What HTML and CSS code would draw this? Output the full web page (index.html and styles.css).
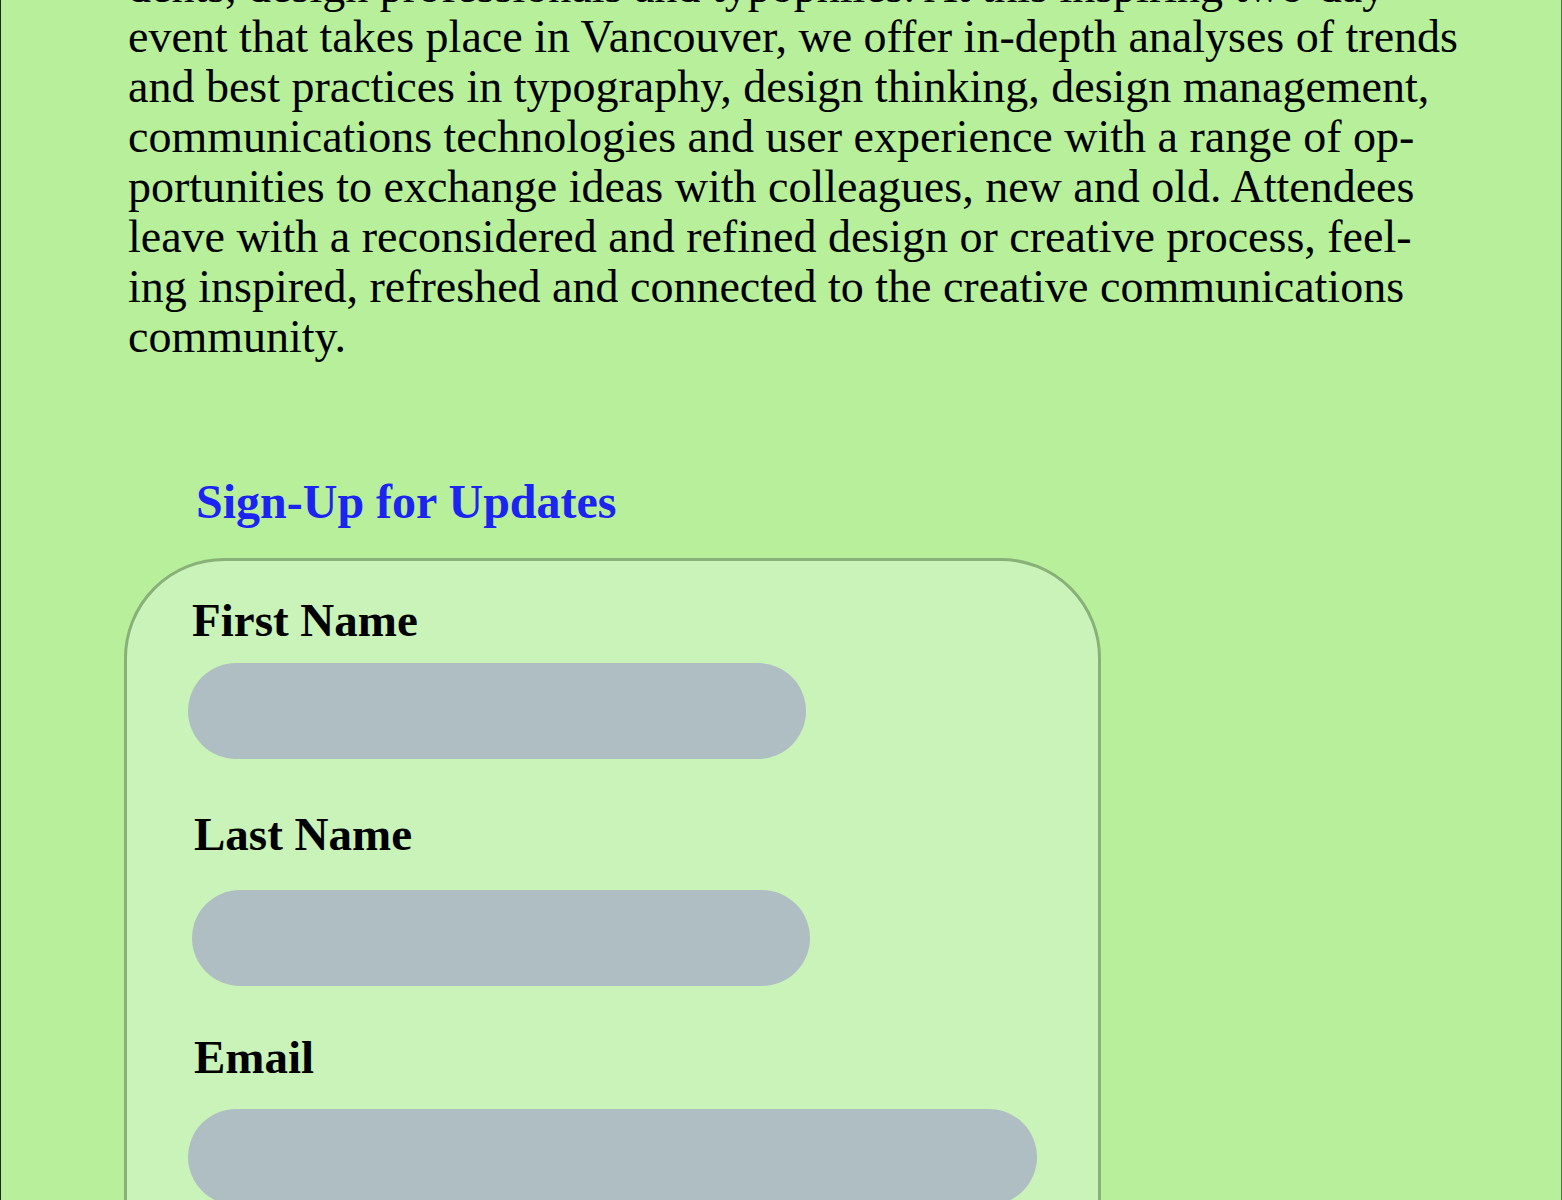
FILE: index.html
```html
<!DOCTYPE html>
<html lang="en">
<head>
<meta charset="utf-8">
<title>Sign-Up for Updates</title>
<link rel="stylesheet" href="styles.css">
</head>
<body>
<div class="page">
  <p class="intro">dents, design professionals and typophiles. At this inspiring two-day<br>event that takes place in Vancouver, we offer in-depth analyses of trends<br>and best practices in typography, design thinking, design management,<br>communications technologies and user experience with a range of op-<br>portunities to exchange ideas with colleagues, new and old. Attendees<br>leave with a reconsidered and refined design or creative process, feel-<br>ing inspired, refreshed and connected to the creative communications<br>community.</p>
  <section class="signup">
    <h2 class="signup-title">Sign-Up for Updates</h2>
    <form class="signup-form">
      <label class="field-label label-first" for="first">First Name</label>
      <input class="field-input input-first" id="first" type="text">
      <label class="field-label label-last" for="last">Last Name</label>
      <input class="field-input input-last" id="last" type="text">
      <label class="field-label label-email" for="email">Email</label>
      <input class="field-input input-email" id="email" type="email">
    </form>
  </section>
</div>
</body>
</html>
```
FILE: styles.css
```css
html, body {
  margin: 0;
  padding: 0;
  background: #b8ef9a;
}
body {
  overflow: hidden;
  font-family: "Liberation Serif", "Times New Roman", serif;
  color: #000;
}
.page {
  min-height: 1200px;
  border-left: 1px solid #1e2a18;
  border-right: 1px solid #50703f;
  box-sizing: border-box;
  background: #b8ef9a;
}
.intro {
  margin: -38px 0 0 0;
  padding-left: 127px;
  font-size: 46px;
  line-height: 50px;
}
.signup {
  padding-top: 112px;
}
.signup-title {
  margin: 0 0 28px 195px;
  font-size: 48px;
  line-height: 56px;
  font-weight: bold;
  color: #1b24f2;
}
.signup-form {
  margin-left: 123px;
  width: 977px;
  box-sizing: border-box;
  border: 3px solid #89b079;
  border-radius: 100px 100px 0 0;
  background: #c9f3b8;
  padding: 34px 0 60px 61px;
  display: flex;
  flex-direction: column;
  align-items: flex-start;
}
.field-label {
  display: block;
  font-size: 47px;
  line-height: 50px;
  font-weight: bold;
}
.field-input {
  display: block;
  height: 96px;
  border: none;
  border-radius: 48px;
  background: #afbec3;
  padding: 0;
  margin: 0;
  outline: none;
}
.label-first { margin: 0 0 18px 4px; }
.input-first { width: 618px; margin-bottom: 50px; }
.label-last { margin: 0 0 31px 6px; }
.input-last { width: 618px; margin: 0 0 46px 4px; }
.label-email { margin: 0 0 27px 6px; }
.input-email { width: 849px; }
```
